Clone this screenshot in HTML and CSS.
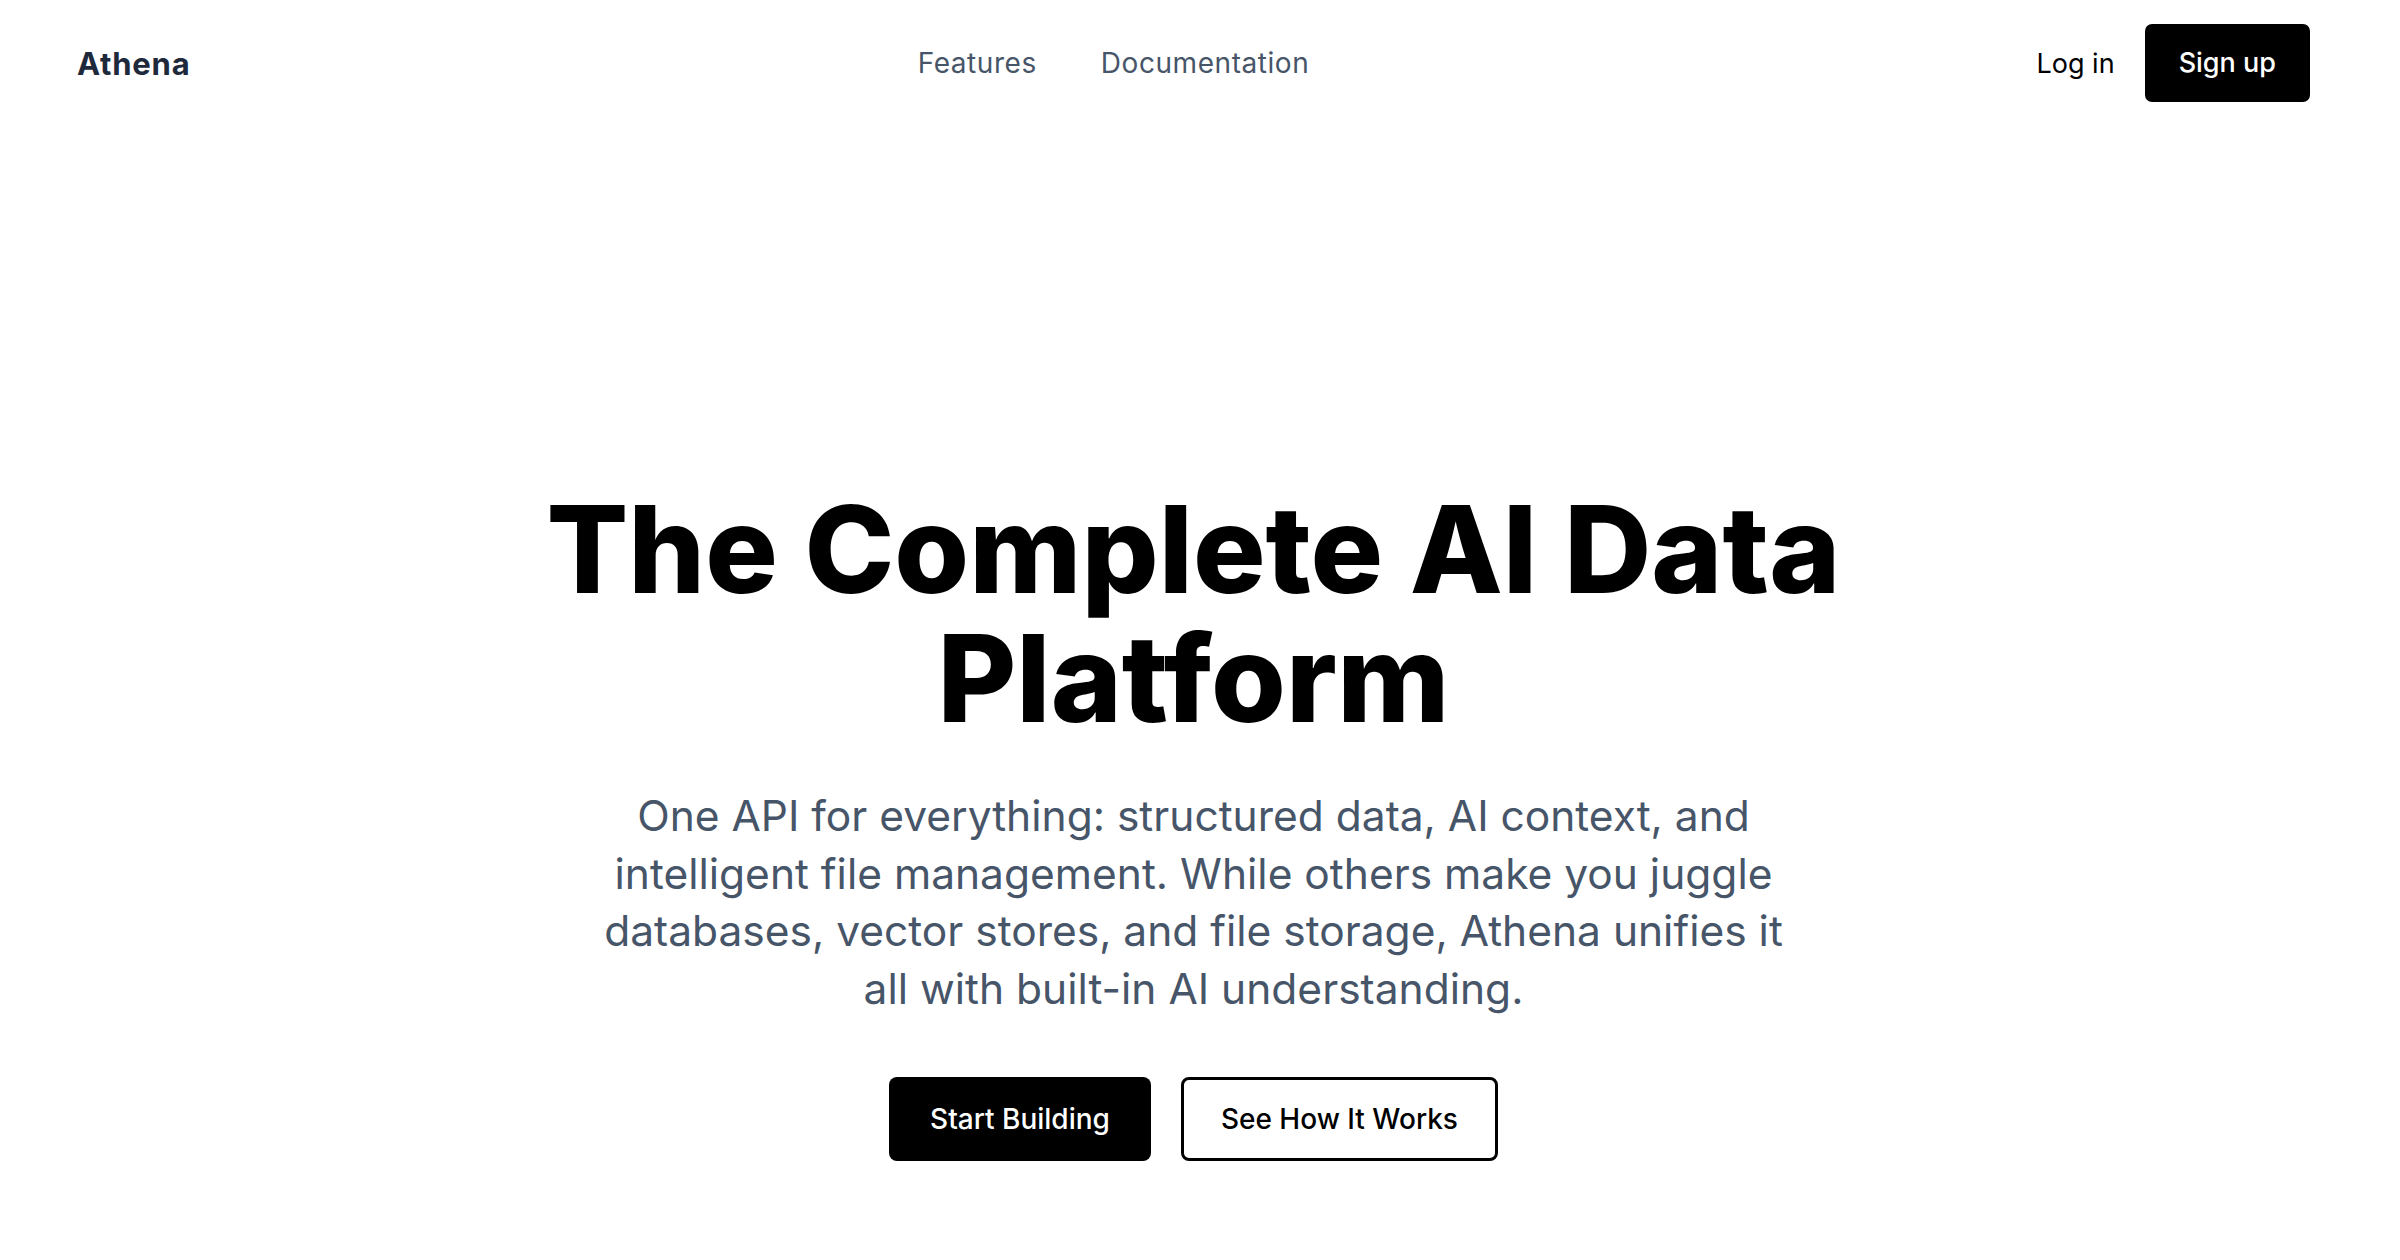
FILE: index.html
```html
<!DOCTYPE html>
<html lang="en">
<head>
<meta charset="utf-8">
<title>Athena — The Complete AI Data Platform</title>
<link rel="stylesheet" href="styles.css">
</head>
<body>
  <div class="page">
    <header class="site-header">
      <a class="logo" href="#">Athena</a>
      <nav class="main-nav">
        <a href="#">Features</a>
        <a href="#">Documentation</a>
      </nav>
      <div class="auth">
        <a class="login" href="#">Log in</a>
        <a class="btn-signup" href="#">Sign up</a>
      </div>
    </header>
    <main class="hero">
      <h1 class="hero-title">The Complete AI Data Platform</h1>
      <p class="hero-text">One API for everything: structured data, AI context, and intelligent file management. While others make you juggle databases, vector stores, and file storage, Athena unifies it all with built-in AI understanding.</p>
      <div class="hero-actions">
        <a class="btn btn-primary" href="#">Start Building</a>
        <a class="btn btn-outline" href="#">See How It Works</a>
      </div>
    </main>
  </div>
</body>
</html>
```

FILE: styles.css
```css
* { box-sizing: border-box; }

html, body {
  margin: 0;
  padding: 0;
  background: #ffffff;
}

body {
  font-family: Inter, "Noto Sans", "Liberation Sans", sans-serif;
  color: #000;
}

a { text-decoration: none; color: inherit; }

.page {
  padding: 0 90px 0 77px;
}

.site-header {
  display: flex;
  align-items: center;
  justify-content: space-between;
  padding: 24px 0;
}

.logo {
  font-size: 31px;
  font-weight: 700;
  color: #1e293b;
  letter-spacing: 0.025em;
}

.main-nav {
  display: flex;
  gap: 64px;
}

.main-nav a {
  font-size: 28px;
  color: #475569;
  letter-spacing: 0.02em;
}

.auth {
  display: flex;
  align-items: center;
  gap: 30px;
}

.login {
  font-size: 27px;
  color: #000;
}

.btn-signup {
  display: block;
  background: #000;
  color: #fff;
  font-size: 27px;
  font-weight: 500;
  line-height: 38px;
  padding: 20px 34px;
  border-radius: 7px;
}

.hero {
  display: flex;
  flex-direction: column;
  align-items: center;
  text-align: center;
  padding-top: 359px;
}

.hero-title {
  margin: 0;
  font-size: 121px;
  line-height: 129px;
  font-weight: 800;
  letter-spacing: 0;
  max-width: 1400px;
  color: #000;
}

.hero-text {
  margin: 44px 0 0;
  max-width: 1195px;
  font-size: 42.5px;
  line-height: 57.5px;
  color: #475569;
}

.hero-actions {
  display: flex;
  gap: 30px;
  margin-top: 60px;
}

.btn {
  display: block;
  font-size: 28px;
  font-weight: 500;
  line-height: 40px;
  border-radius: 8px;
}

.btn-primary {
  background: #000;
  color: #fff;
  padding: 22px 41px;
}

.btn-outline {
  background: #fff;
  color: #000;
  border: 3px solid #000;
  padding: 19px 37px;
}
```
